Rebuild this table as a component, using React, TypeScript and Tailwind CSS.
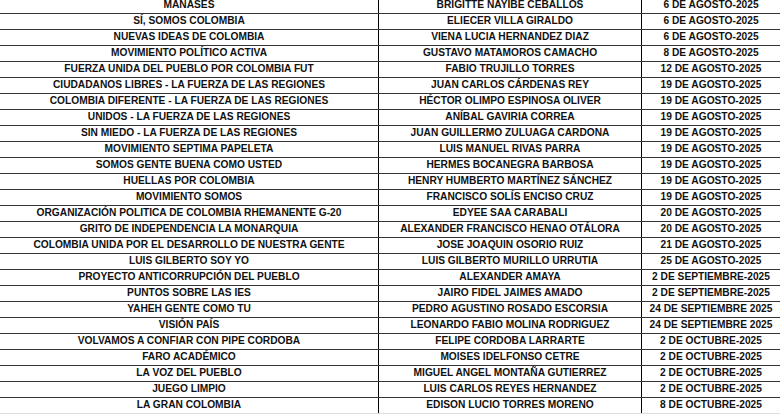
const rows: [string, string, string][] = [
  ["MANASES", "BRIGITTE NAYIBE CEBALLOS", "6 DE AGOSTO-2025"],
  ["SÍ, SOMOS COLOMBIA", "ELIECER VILLA GIRALDO", "6 DE AGOSTO-2025"],
  ["NUEVAS IDEAS DE COLOMBIA", "VIENA LUCIA HERNANDEZ DIAZ", "6 DE AGOSTO-2025"],
  ["MOVIMIENTO POLÍTICO ACTIVA", "GUSTAVO MATAMOROS CAMACHO", "8 DE AGOSTO-2025"],
  ["FUERZA UNIDA DEL PUEBLO POR COLOMBIA FUT", "FABIO TRUJILLO TORRES", "12 DE AGOSTO-2025"],
  ["CIUDADANOS LIBRES - LA FUERZA DE LAS REGIONES", "JUAN CARLOS CÁRDENAS REY", "19 DE AGOSTO-2025"],
  ["COLOMBIA DIFERENTE - LA FUERZA DE LAS REGIONES", "HÉCTOR OLIMPO ESPINOSA OLIVER", "19 DE AGOSTO-2025"],
  ["UNIDOS - LA FUERZA DE LAS REGIONES", "ANÍBAL GAVIRIA CORREA", "19 DE AGOSTO-2025"],
  ["SIN MIEDO - LA FUERZA DE LAS REGIONES", "JUAN GUILLERMO ZULUAGA CARDONA", "19 DE AGOSTO-2025"],
  ["MOVIMIENTO SEPTIMA PAPELETA", "LUIS MANUEL RIVAS PARRA", "19 DE AGOSTO-2025"],
  ["SOMOS GENTE BUENA COMO USTED", "HERMES BOCANEGRA BARBOSA", "19 DE AGOSTO-2025"],
  ["HUELLAS POR COLOMBIA", "HENRY HUMBERTO MARTÍNEZ SÁNCHEZ", "19 DE AGOSTO-2025"],
  ["MOVIMIENTO SOMOS", "FRANCISCO SOLÍS ENCISO CRUZ", "19 DE AGOSTO-2025"],
  ["ORGANIZACIÓN POLITICA DE COLOMBIA RHEMANENTE G-20", "EDYEE SAA CARABALI", "20 DE AGOSTO-2025"],
  ["GRITO DE INDEPENDENCIA LA MONARQUIA", "ALEXANDER FRANCISCO HENAO OTÁLORA", "20 DE AGOSTO-2025"],
  ["COLOMBIA UNIDA POR EL DESARROLLO DE NUESTRA GENTE", "JOSE JOAQUIN OSORIO RUIZ", "21 DE AGOSTO-2025"],
  ["LUIS GILBERTO SOY YO", "LUIS GILBERTO MURILLO URRUTIA", "25 DE AGOSTO-2025"],
  ["PROYECTO ANTICORRUPCIÓN DEL PUEBLO", "ALEXANDER AMAYA", "2 DE SEPTIEMBRE-2025"],
  ["PUNTOS SOBRE LAS IES", "JAIRO FIDEL JAIMES AMADO", "2 DE SEPTIEMBRE-2025"],
  ["YAHEH GENTE COMO TU", "PEDRO AGUSTINO ROSADO ESCORSIA", "24 DE SEPTIEMBRE 2025"],
  ["VISIÓN PAÍS", "LEONARDO FABIO MOLINA RODRIGUEZ", "24 DE SEPTIEMBRE 2025"],
  ["VOLVAMOS A CONFIAR CON PIPE CORDOBA", "FELIPE CORDOBA LARRARTE", "2 DE OCTUBRE-2025"],
  ["FARO ACADÉMICO", "MOISES IDELFONSO CETRE", "2 DE OCTUBRE-2025"],
  ["LA VOZ DEL PUEBLO", "MIGUEL ANGEL MONTAÑA GUTIERREZ", "2 DE OCTUBRE-2025"],
  ["JUEGO LIMPIO", "LUIS CARLOS REYES HERNANDEZ", "2 DE OCTUBRE-2025"],
  ["LA GRAN COLOMBIA", "EDISON LUCIO TORRES MORENO", "8 DE OCTUBRE-2025"],
];

function Cell({ text, last }: { text: string; last?: boolean }) {
  return (
    <div
      className={`flex items-center justify-center leading-none whitespace-nowrap ${
        last ? "" : "border-r border-black"
      }`}
    >
      <span className="inline-block scale-y-[1.12]">{text}</span>
    </div>
  );
}

export default function App() {
  return (
    <div className="h-[414px] w-[780px] overflow-hidden bg-white font-['Liberation_Sans',Arial,sans-serif] text-[10.2px] font-bold text-[#111]">
      <div className="-mt-[2px]">
        {rows.map(([party, name, date], i) => (
          <div
            key={i}
            className={`grid h-[16px] grid-cols-[379px_263px_1fr] border-b ${
              i === rows.length - 1 ? "border-[#ddd]" : "border-[#333]"
            }`}
          >
            <Cell text={party} />
            <Cell text={name} />
            <Cell text={date} last />
          </div>
        ))}
      </div>
    </div>
  );
}
